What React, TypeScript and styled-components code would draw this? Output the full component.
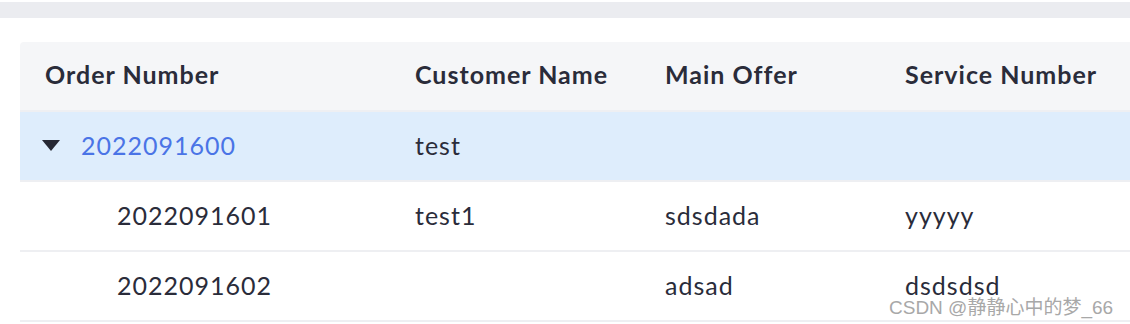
import styled, { createGlobalStyle } from 'styled-components';

const GlobalStyle = createGlobalStyle`
  body {
    margin: 0;
    background: #fff;
    font-family: Lato, "Noto Sans", sans-serif;
    overflow: hidden;
  }
`;

const Page = styled.div`
  position: relative;
  width: 1130px;
  height: 324px;
  overflow: hidden;
  padding-top: 2px;
  box-sizing: border-box;
`;

const TopBar = styled.div`
  height: 16px;
  background: #ebecf0;
`;

const Table = styled.div`
  margin: 24px 0 0 20px;
  width: 1140px;
  border-radius: 4px 0 0 0;
  overflow: hidden;
`;

const Row = styled.div<{ $head?: boolean; $active?: boolean }>`
  display: grid;
  grid-template-columns: 370px 250px 240px 280px;
  height: 70px;
  box-sizing: border-box;
  padding-bottom: ${(p) => (p.$head ? 4 : 2)}px;
  align-items: center;
  border-bottom: 2px solid #eeeff2;
  background: ${(p) => (p.$head ? '#f5f6f8' : p.$active ? '#deedfc' : '#fff')};
  color: #2a2c3a;
  font-size: 25px;
  letter-spacing: 1px;
  font-weight: ${(p) => (p.$head ? 700 : 400)};
`;

const Cell = styled.div<{ $indent?: number }>`
  display: flex;
  align-items: center;
  padding-left: ${(p) => 25 + (p.$indent ?? 0)}px;
  white-space: nowrap;
`;

const Toggle = styled.span`
  display: inline-block;
  width: 0;
  height: 0;
  margin: 0 21px 0 -3px;
  border-left: 9px solid transparent;
  border-right: 9px solid transparent;
  border-top: 11px solid #262833;
`;

const Link = styled.span`
  color: #4a74e6;
`;

const Watermark = styled.div`
  position: absolute;
  left: 889px;
  top: 292px;
  font-family: "Liberation Sans", "Noto Sans CJK SC", sans-serif;
  font-size: 19px;
  color: #a8a8a8;
  text-shadow: 0 0 1px #fff;
`;

const children = [
  { order: '2022091601', name: 'test1', offer: 'sdsdada', service: 'yyyyy' },
  { order: '2022091602', name: '', offer: 'adsad', service: 'dsdsdsd' },
];

export default function App() {
  return (
    <Page>
      <GlobalStyle />
      <TopBar />
      <Table>
        <Row $head>
          <Cell>Order Number</Cell>
          <Cell>Customer Name</Cell>
          <Cell>Main Offer</Cell>
          <Cell>Service Number</Cell>
        </Row>
        <Row $active>
          <Cell>
            <Toggle />
            <Link>2022091600</Link>
          </Cell>
          <Cell>test</Cell>
          <Cell />
          <Cell />
        </Row>
        {children.map((c) => (
          <Row key={c.order}>
            <Cell $indent={72}>{c.order}</Cell>
            <Cell>{c.name}</Cell>
            <Cell>{c.offer}</Cell>
            <Cell>{c.service}</Cell>
          </Row>
        ))}
      </Table>
      <Watermark>CSDN @静静心中的梦_66</Watermark>
    </Page>
  );
}
